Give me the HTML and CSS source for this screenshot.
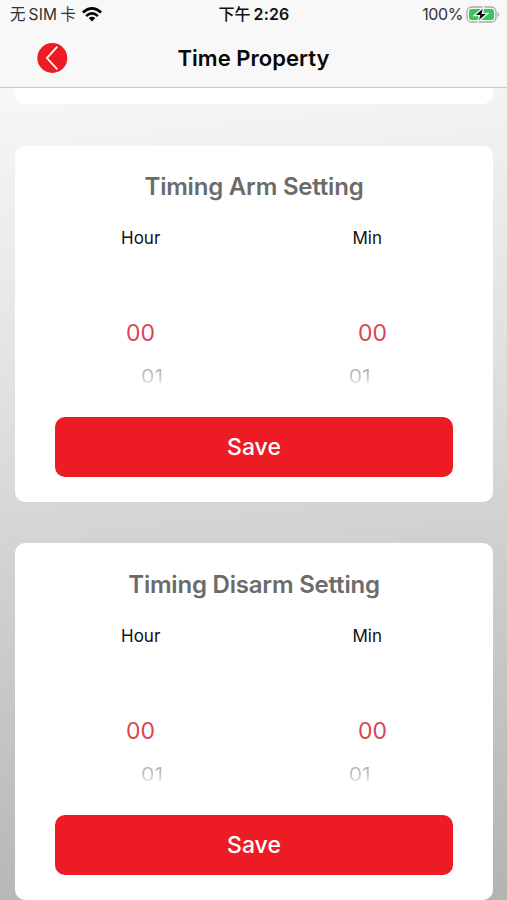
FILE: index.html
```html
<!DOCTYPE html>
<html lang="en">
<head>
<meta charset="utf-8">
<title>Time Property</title>
<link rel="stylesheet" href="styles.css">
</head>
<body>
<div class="screen">
  <header class="header">
    <div class="status">
      <div class="carrier"><span class="carrier-name">无<b class="sim">SIM</b>卡</span>
        <svg class="wifi" width="20" height="15" viewBox="0 0 20 15"><g fill="none" stroke="#050505" stroke-width="2.6"><path d="M.9 5.5Q10-2.7 19.1 5.5"/><path d="M4.1 8.9Q10 3.7 15.9 8.9"/></g><path d="M6.7 11Q10 8.4 13.3 11L10 14.5Z" fill="#050505"/></svg>
      </div>
      <div class="clock">下午<span class="digits">2:26</span></div>
      <div class="power"><span class="percent">100%</span>
        <svg class="battery" width="34" height="18" viewBox="0 0 34 18"><rect x="1" y="1" width="29" height="15" rx="4.6" fill="none" stroke="#a9a9a9" stroke-width="1.3"/><rect x="3" y="3" width="25" height="11" rx="2.7" fill="#35c759"/><path d="M31.6 6v5q1.6-.7 1.6-2.5T31.6 6Z" fill="#a9a9a9"/><path d="M17.8 1 8.2 9.6h5.3L11.6 16 21.8 7.4h-5.4Z" fill="#050505" stroke="#eef8f0" stroke-width="1.4"/></svg>
      </div>
    </div>
    <nav class="nav">
      <button class="back" aria-label="Back"><svg width="31" height="31" viewBox="0 0 31 31"><circle cx="15.3" cy="15" r="15" fill="#ed1c24"/><path d="M20.3 3.7 9.9 15.1l10.4 11.2" fill="none" stroke="#fff" stroke-width="1.8"/></svg></button>
      <h1 class="title">Time Property</h1>
    </nav>
  </header>
  <main class="content">
    <div class="card-end"></div>
    <section class="card">
      <h2 class="heading">Timing Arm Setting</h2>
      <div class="labels"><span>Hour</span><span>Min</span></div>
      <div class="selected"><span>00</span><span>00</span></div>
      <div class="next"><span>01</span><span>01</span></div>
      <button class="save">Save</button>
    </section>
    <section class="card">
      <h2 class="heading">Timing Disarm Setting</h2>
      <div class="labels"><span>Hour</span><span>Min</span></div>
      <div class="selected"><span>00</span><span>00</span></div>
      <div class="next"><span>01</span><span>01</span></div>
      <button class="save">Save</button>
    </section>
  </main>
</div>
</body>
</html>
```
FILE: styles.css
```css
* { box-sizing: border-box; }
body { margin: 0; font-family: Inter, "Noto Sans CJK SC", sans-serif; color: #111; }
button { border: 0; padding: 0; background: none; font-family: inherit; }
h1, h2 { margin: 0; }
.screen { height: 900px; overflow: hidden; background: linear-gradient(174deg, #fbfbfb 4%, #f4f4f4 14%, #e0e0e0 43%, #d3d3d3 58%, #b3b3b3 100%); }
.header { height: 88px; background: #f8f8f8; border-bottom: 1px solid #c9c9c9; }
.status { height: 29px; display: grid; grid-template-columns: 1fr auto 1fr; align-items: center; padding: 0 8px 0 9px; font-size: 16px; line-height: 29px; }
.carrier { display: flex; align-items: center; gap: 6px; padding-left: 1px; color: #333; }
.carrier-name { white-space: nowrap; font-size: 15.5px; }
.sim { font-weight: 400; margin: 0 3px; letter-spacing: .2px; }
.clock { font-weight: 500; white-space: nowrap; }
.digits { font-weight: 600; margin-left: 3px; letter-spacing: .2px; }
.power { display: flex; justify-content: flex-end; align-items: center; gap: 3px; margin-right: -1px; color: #333; }
.percent { letter-spacing: -.4px; }
.nav { height: 58px; display: grid; grid-template-columns: 82px 1fr 82px; align-items: center; }
.back { width: 31px; height: 31px; margin-left: 37px; }
.back svg { display: block; }
.title { font-size: 22px; font-weight: 600; letter-spacing: .05px; text-align: center; color: #080808; }
.content { padding: 0 14px 0 15px; }
.card-end { height: 16px; background: #fff; border-radius: 0 0 10px 10px; margin-bottom: 42px; }
.card { height: 356px; background: #fff; border-radius: 10px; padding: 26px 40px 25px; margin-bottom: 41px; display: flex; flex-direction: column; }
.card:last-child { height: 357px; padding-top: 27px; }
.heading { height: 30px; font-size: 24px; line-height: 30px; font-weight: 600; letter-spacing: -.2px; text-align: center; color: #6b6b6b; white-space: nowrap; }
.labels { display: flex; justify-content: space-between; margin-top: 23px; padding: 0 71px 0 66px; font-size: 17px; line-height: 26px; }
.selected { display: flex; justify-content: space-between; margin-top: 67px; padding: 0 66px 0 71px; color: #dc4552; font-size: 23px; line-height: 30px; }
.next { display: flex; justify-content: space-between; margin-top: 16px; padding: 0 82px 0 86px; font-size: 19px; line-height: 26px; height: 26px; }
.next span { color: transparent; background: linear-gradient(#aaa 10%, #c8c8c8 50%, #f4f4f4 88%); background-clip: text; transform: scaleX(1.12); transform-origin: left; }
.next span:last-child { transform-origin: right; }
.save { margin-top: auto; height: 60px; border-radius: 10px; background: #ed1c24; color: #fff; font-size: 23px; font-weight: 500; }
```
